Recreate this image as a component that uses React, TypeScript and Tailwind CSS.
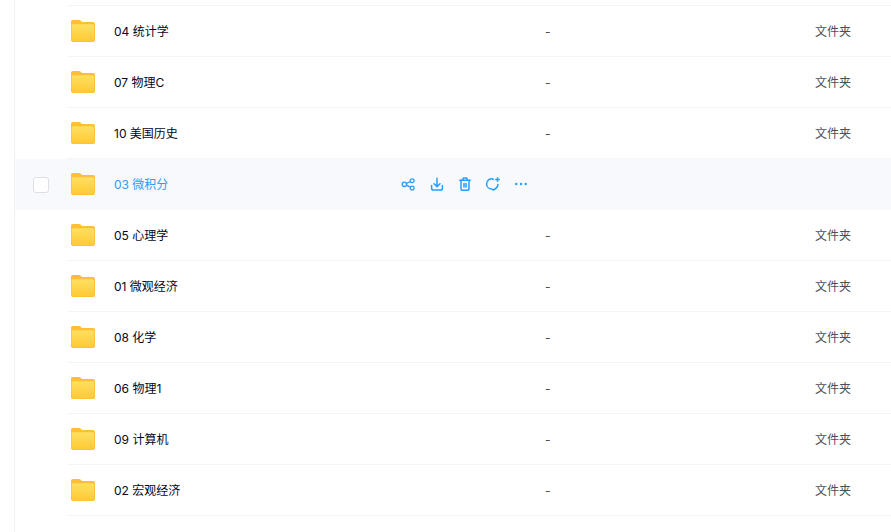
import React from "react";

const rows = [
    {name: "04 统计学"},
    {name: "07 物理C"},
    {name: "10 美国历史"},
    {name: "03 微积分", hover: true},
    {name: "05 心理学"},
    {name: "01 微观经济"},
    {name: "08 化学"},
    {name: "06 物理1"},
    {name: "09 计算机"},
    {name: "02 宏观经济"},
];

const FolderIcon = () => (
    <svg width="24" height="22" viewBox="0 0 24 22" className="shrink-0">
        <defs>
            <linearGradient id="folderFront" x1="0" y1="0" x2="0" y2="1">
                <stop offset="0" stopColor="#ffe060" />
                <stop offset="1" stopColor="#ffca34" />
            </linearGradient>
        </defs>
        <path
            d="M1.800 0h6c.8 0 1.400.3 2 .8L11 2h11c1.100 0 2 .9 2 2v16c0 1.100-.9 2-2 2H2c-1.100 0-2-.9-2-2V1.800C0 .8.800 0 1.800 0z"
            fill="#ffbe35"
        />
        <path
            d="M.7 6c0-1 .8-1.800 1.800-1.800h19c1 0 1.800.8 1.800 1.800v13.400c0 1-.8 1.800-1.800 1.800h-19c-1 0-1.800-.8-1.800-1.800z"
            fill="url(#folderFront)"
        />
    </svg>
);

const HoverActions = () => (
    <div className="ml-[1px] flex items-center gap-[12px] text-[#2a9dff]">
        <svg width="16" height="16" viewBox="0 0 16 16" fill="none" stroke="currentColor" strokeWidth="1.300">
            <circle cx="3.400" cy="8.300" r="2.200" />
            <circle cx="11.200" cy="4.700" r="1.900" />
            <circle cx="11.200" cy="12" r="1.900" />
            <path d="M5.400 7.400l4.100-1.900M5.400 9.200l4.100 2" />
        </svg>
        <svg width="16" height="16" viewBox="0 0 16 16" fill="none" stroke="currentColor" strokeWidth="1.500" strokeLinecap="round" strokeLinejoin="round">
            <path d="M8 2.200v8.300M5 7.700l3 2.900 3-2.900" />
            <path d="M2.600 9.500v2.700c0 1 .8 1.800 1.800 1.800h7.200c1 0 1.800-.8 1.800-1.800V9.500" />
        </svg>
        <svg width="16" height="16" viewBox="0 0 16 16" fill="none" stroke="currentColor" strokeWidth="1.500" strokeLinecap="round" strokeLinejoin="round">
            <path d="M2.800 4.200h10.400M6 4.100V2.700a.7.7 0 0 1 .7-.7h2.600a.7.7 0 0 1 .7.7v1.400" />
            <path d="M4 4.300v8.200c0 1 .8 1.800 1.800 1.800h4.400c1 0 1.800-.8 1.800-1.800V4.300" />
            <path d="M7 7.500v3.500M9 7.500v3.500" />
        </svg>
        <svg width="16" height="16" viewBox="0 0 16 16" fill="none" stroke="currentColor" strokeWidth="1.500" strokeLinecap="round" strokeLinejoin="round">
            <path d="M8.300 3.200A5 5 0 0 0 1.600 8.200c0 2.600 2.300 4.600 5.200 4.800l1.200 1c2.700-1 4.700-3 5-5.600" />
            <path d="M12.500 1.900v3.400M10.800 3.600h3.400" />
        </svg>
        <svg width="16" height="16" viewBox="0 0 16 16" fill="currentColor">
            <circle cx="3.300" cy="8" r="1.200" />
            <circle cx="8" cy="8" r="1.200" />
            <circle cx="12.700" cy="8" r="1.200" />
        </svg>
    </div>
);

const App: React.FC = () => {
    return (
        <div className="w-[891px] h-[532px] overflow-hidden bg-white flex text-[12px] font-['Inter','Noto_Sans_CJK_SC',sans-serif]">
            {/* Left edge of the list panel */}
            <div className="w-[15px] h-full border-r border-[#f1f2f4] shrink-0" />

            <div className="flex-1 flex flex-col">
                <div className="h-[6px] ml-[52px] border-b border-[#f5f5f6] shrink-0" />
                {rows.map((row) => (
                    <div
                        key={row.name}
                        className={`h-[51px] shrink-0 flex items-center ${row.hover ? "bg-[#f7f9fc]" : ""}`}
                    >
                        <div className="w-[52px] shrink-0 pl-[18px]">
                            {row.hover && (
                                <div className="w-[16px] h-[16px] rounded-[3px] bg-white border border-[#dcdfe6]" />
                            )}
                        </div>
                        <div
                            className={`h-full flex-1 flex items-center pl-[4px] border-b ${
                                row.hover ? "border-transparent" : "border-[#f5f5f6]"
                            }`}
                        >
                            <FolderIcon />
                            <div
                                className={`w-[305px] shrink-0 pl-[19px] pt-[1px] ${
                                    row.hover ? "text-[#2a9dff]" : "text-[#03081a]"
                                }`}
                            >
                                {row.name}
                            </div>
                            {row.hover ? (
                                <HoverActions />
                            ) : (
                                <>
                                    <div className="w-[415px] shrink-0 pl-[145px] pt-[1px] text-[#4b4f59]">-</div>
                                    <div className="pt-[1px] text-[#4b4f59]">文件夹</div>
                                </>
                            )}
                        </div>
                    </div>
                ))}
            </div>
        </div>
    );
};

export default App;
